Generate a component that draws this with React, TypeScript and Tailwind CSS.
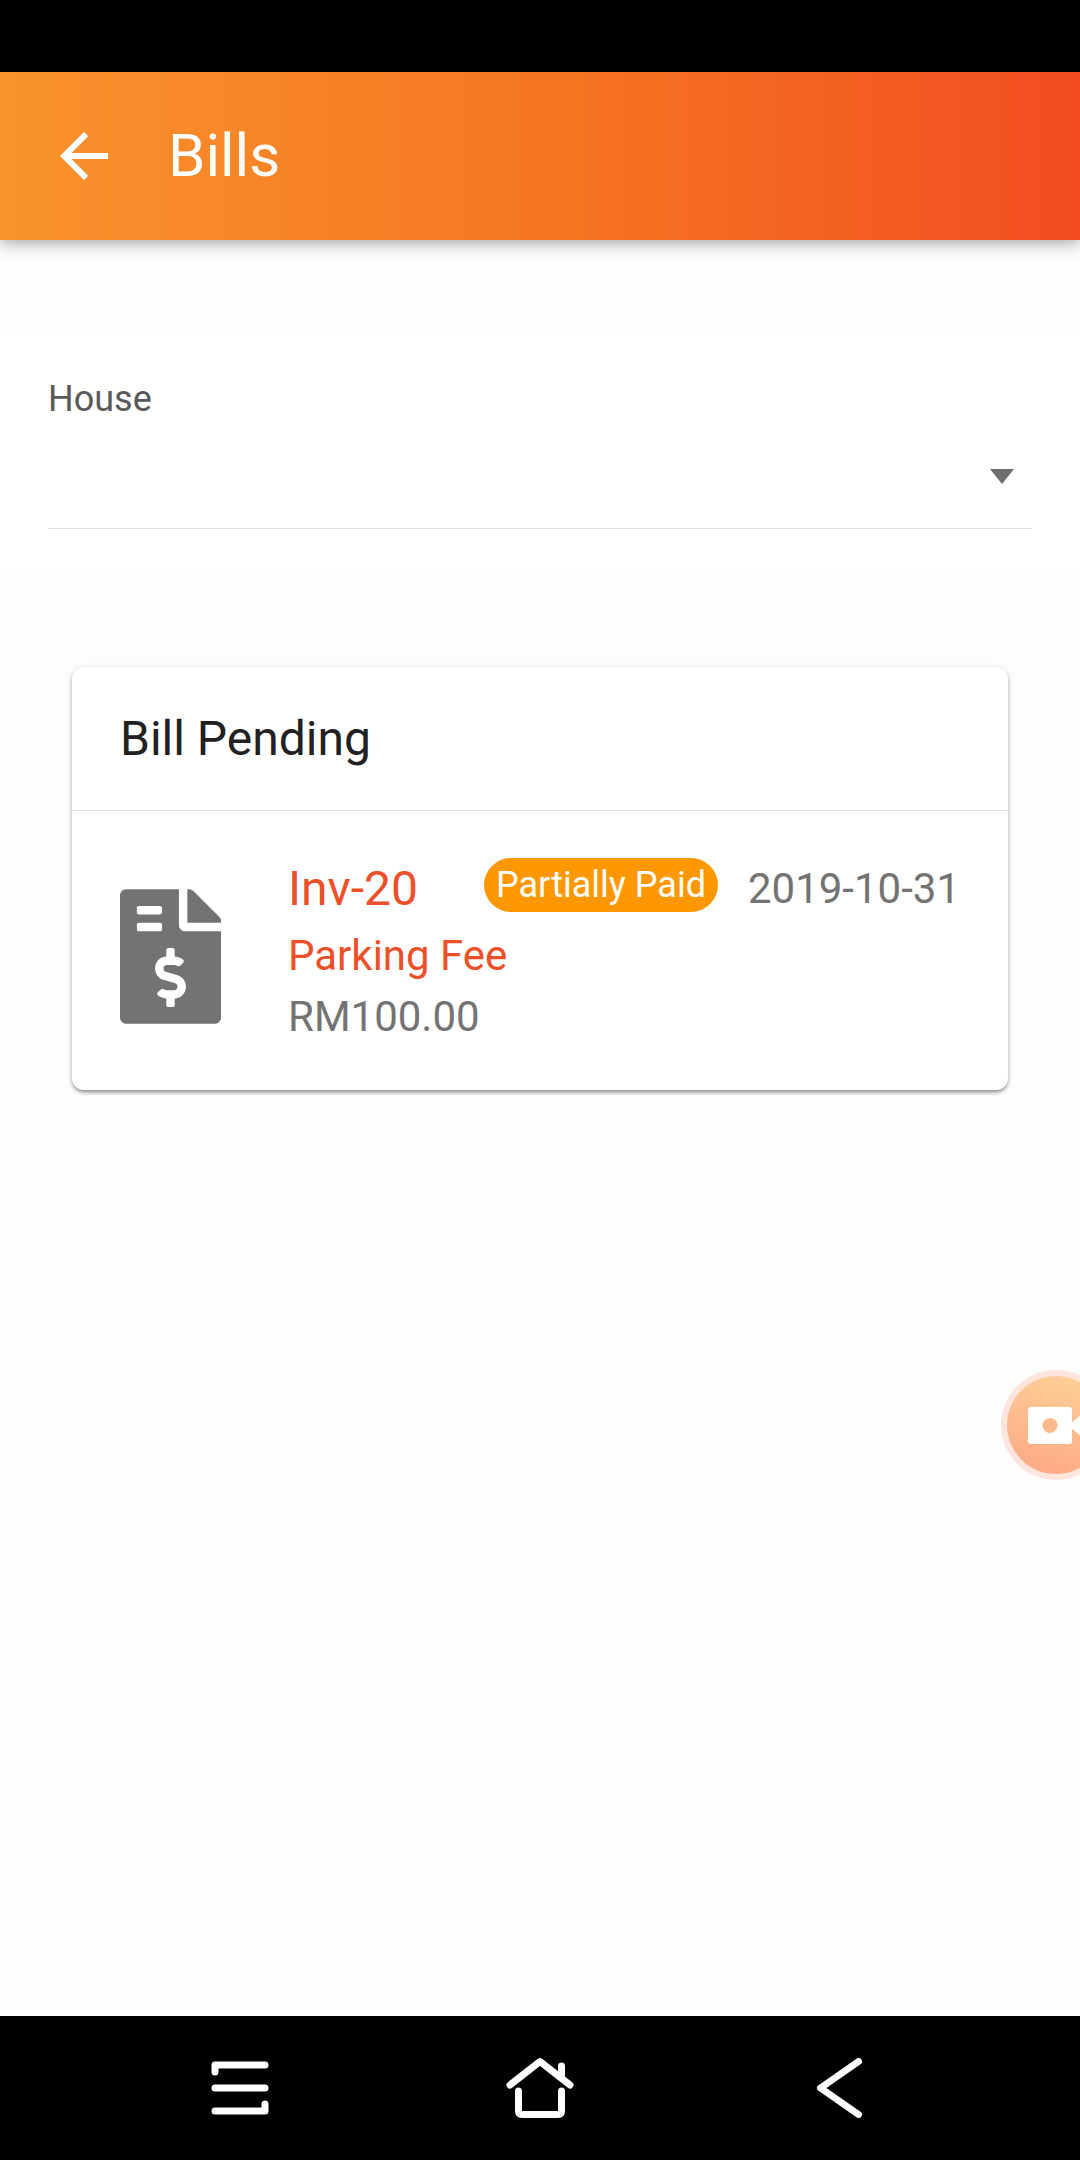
import React from "react";
import { FaFileInvoiceDollar } from "react-icons/fa";
import { MdArrowBack } from "react-icons/md";

type Bill = {
  id: string;
  status: string;
  date: string;
  title: string;
  amount: string;
};

const bills: Bill[] = [
  {
    id: "Inv-20",
    status: "Partially Paid",
    date: "2019-10-31",
    title: "Parking Fee",
    amount: "RM100.00",
  },
];

function AppBar() {
  return (
    <header className="relative z-10 flex h-[168px] items-center gap-12 bg-linear-to-r from-[#f9932d] via-[#f57621] to-[#f24b22] px-12 text-white shadow-[0_3px_16px_rgba(0,0,0,0.36)]">
      <button type="button" aria-label="Back">
        <MdArrowBack className="size-[72px]" />
      </button>
      <h1 className="text-[60px] leading-[72px]">Bills</h1>
    </header>
  );
}

function HouseField() {
  return (
    <section className="bg-white px-12 pt-[39px] pb-11">
      <label htmlFor="house" className="block text-[36px] leading-[48px] text-[#5a5a5a]">
        House
      </label>
      <div className="relative border-b border-[#dcdcdc]">
        <select
          id="house"
          className="block h-[105px] w-full appearance-none bg-transparent text-[42px] text-[#737373] outline-none"
        >
          <option value=""></option>
        </select>
        <svg
          viewBox="0 0 24 15"
          className="pointer-events-none absolute top-[46px] right-[18px] h-[15px] w-6 fill-[#6e6e6e]"
          aria-hidden="true"
        >
          <path d="M0 0h24L12 15z" />
        </svg>
      </div>
    </section>
  );
}

function BillRow({ bill }: { bill: Bill }) {
  return (
    <li className="flex items-center gap-[67px] px-12 pt-[42px] pb-[43px]">
      <div className="pt-3">
        <FaFileInvoiceDollar className="h-[135px] w-[101px] text-[#737373]" />
      </div>
      <div className="min-w-0 flex-1">
        <div className="flex items-center">
          <h3 className="text-[48px] leading-[72px] text-[#ec5029]">{bill.id}</h3>
          <span className="mr-[30px] mb-2 ml-auto rounded-full bg-[#ff9800] px-3 text-[36px] leading-[54px] text-white">
            {bill.status}
          </span>
          <time dateTime={bill.date} className="text-[42px] leading-[72px] text-[#737373]">
            {bill.date}
          </time>
        </div>
        <p className="text-[42px] leading-[62px] text-[#ec5029]">{bill.title}</p>
        <p className="text-[42px] leading-[60px] text-[#737373]">{bill.amount}</p>
      </div>
    </li>
  );
}

function RecorderBubble() {
  return (
    <button
      type="button"
      aria-label="Screen recorder"
      className="absolute top-[1370px] -right-[31px] size-[110px]"
    >
      <svg viewBox="0 0 110 110" className="size-full">
        <defs>
          <linearGradient id="bubble" x1="0.65" y1="0" x2="0.4" y2="1">
            <stop offset="0" stopColor="#fdcf98" />
            <stop offset="1" stopColor="#fea985" />
          </linearGradient>
        </defs>
        <circle cx="55" cy="55" r="55" fill="#fde5de" />
        <circle cx="55" cy="55" r="49" fill="url(#bubble)" />
        <rect x="27" y="37" width="44" height="37" rx="3" fill="#fff" />
        <path d="M70 53l16-13v31l-16-13z" fill="#fff" />
        <circle cx="49" cy="55.500" r="7.500" fill="#fdb88b" />
      </svg>
    </button>
  );
}

function SystemNav() {
  return (
    <nav
      aria-label="System"
      className="grid h-36 grid-cols-3 items-center justify-items-center bg-black px-[90px]"
    >
      <button type="button" aria-label="Recent apps">
        <svg
          viewBox="0 0 72 72"
          className="size-[72px] fill-none stroke-white stroke-[7px]"
          strokeLinecap="round"
          strokeLinejoin="round"
        >
          <path d="M61 13H11v7M11 36h50M11 59h50v-7" />
        </svg>
      </button>
      <button type="button" aria-label="Home">
        <svg
          viewBox="0 0 72 72"
          className="size-[72px] fill-none stroke-white stroke-[7px]"
          strokeLinecap="round"
          strokeLinejoin="round"
        >
          <path d="M6 33L36 9.500L66 33M57.500 14v12M14.500 39v20q0 3.500 3.500 3.500h36q3.500 0 3.500-3.500V39" />
        </svg>
      </button>
      <button type="button" aria-label="Back to previous app">
        <svg
          viewBox="0 0 72 72"
          className="size-[72px] fill-none stroke-white stroke-[7px]"
          strokeLinecap="round"
          strokeLinejoin="round"
        >
          <path d="M54.500 9.500L16.500 36l38 26.500" />
        </svg>
      </button>
    </nav>
  );
}

export default function App() {
  return (
    <div className="relative flex min-h-screen flex-col overflow-x-clip bg-[#fdfdfd] font-['Roboto',sans-serif]">
      <div className="h-[72px] bg-black" />
      <AppBar />
      <main className="flex-1 pt-24">
        <HouseField />
        <section className="mx-[72px] mt-[94px] rounded-xl bg-white shadow-[0_3px_4px_-1px_rgba(0,0,0,0.42),0_1px_6px_rgba(0,0,0,0.14)]">
          <h2 className="border-b border-[#e0e0e0] px-12 py-9 text-[48px] leading-[71px] text-[#212121]">
            Bill Pending
          </h2>
          <ul>
            {bills.map((bill) => (
              <BillRow key={bill.id} bill={bill} />
            ))}
          </ul>
        </section>
      </main>
      <RecorderBubble />
      <SystemNav />
    </div>
  );
}
